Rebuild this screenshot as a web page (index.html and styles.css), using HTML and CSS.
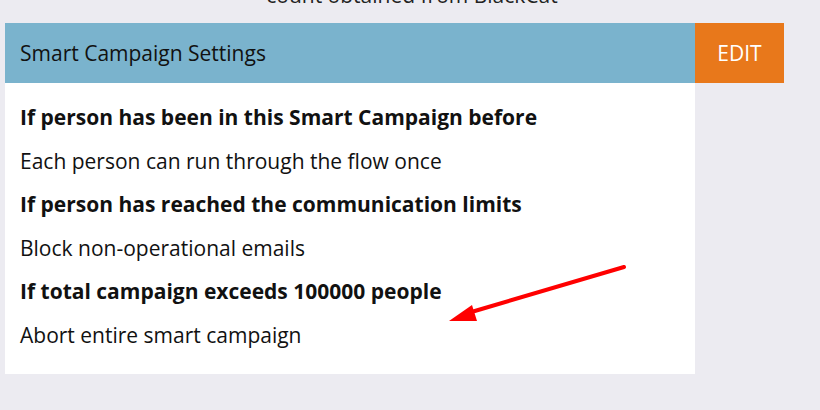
FILE: index.html
```html
<!DOCTYPE html>
<html>
<head>
<meta charset="utf-8">
<link rel="stylesheet" href="styles.css">
</head>
<body>
<div class="page">
  <div class="note">- count obtained from BlackCat</div>
  <div class="card">
    <div class="head">
      <div class="title">Smart Campaign Settings</div>
      <div class="edit">EDIT</div>
    </div>
    <div class="body">
      <div class="row q">If person has been in this Smart Campaign before</div>
      <div class="row a">Each person can run through the flow once</div>
      <div class="row q">If person has reached the communication limits</div>
      <div class="row a">Block non-operational emails</div>
      <div class="row q">If total campaign exceeds 100000 people</div>
      <div class="row a">Abort entire smart campaign</div>
    </div>
  </div>
  <svg class="arrow" width="820" height="410" viewBox="0 0 820 410">
    <line x1="624" y1="267" x2="468" y2="313" stroke="#ff0000" stroke-width="4" stroke-linecap="round"/>
    <polygon points="449,321 472,305 477,321" fill="#ff0000"/>
  </svg>
</div>
</body>
</html>
```
FILE: styles.css
```css
html, body {
  margin: 0;
  padding: 0;
  background: #ecebf1;
  font-family: "Open Sans", sans-serif;
  color: #111;
}
.page {
  position: relative;
  width: 820px;
  height: 410px;
  overflow: hidden;
}
.note {
  height: 24px;
  margin-top: -17px;
  margin-bottom: 16px;
  padding-left: 254px;
  font-size: 21px;
  line-height: 24px;
  color: #222;
  white-space: nowrap;
}
.card {
  margin-left: 5px;
  width: 779px;
}
.head {
  display: flex;
  height: 60px;
}
.title {
  width: 690px;
  background: #7ab3cd;
  display: flex;
  align-items: center;
  padding-left: 15px;
  box-sizing: border-box;
  font-size: 21px;
  color: #111;
}
.edit {
  width: 89px;
  background: #e8781b;
  color: #fff;
  font-size: 21px;
  display: flex;
  align-items: center;
  justify-content: center;
}
.body {
  width: 690px;
  background: #fff;
  padding: 13px 0 17px 15px;
  box-sizing: border-box;
}
.row {
  height: 43.5px;
  line-height: 43.5px;
  white-space: nowrap;
}
.q {
  font-weight: bold;
  font-size: 21px;
}
.a {
  font-size: 21px;
}
.arrow {
  position: absolute;
  left: 0;
  top: 0;
}
```
